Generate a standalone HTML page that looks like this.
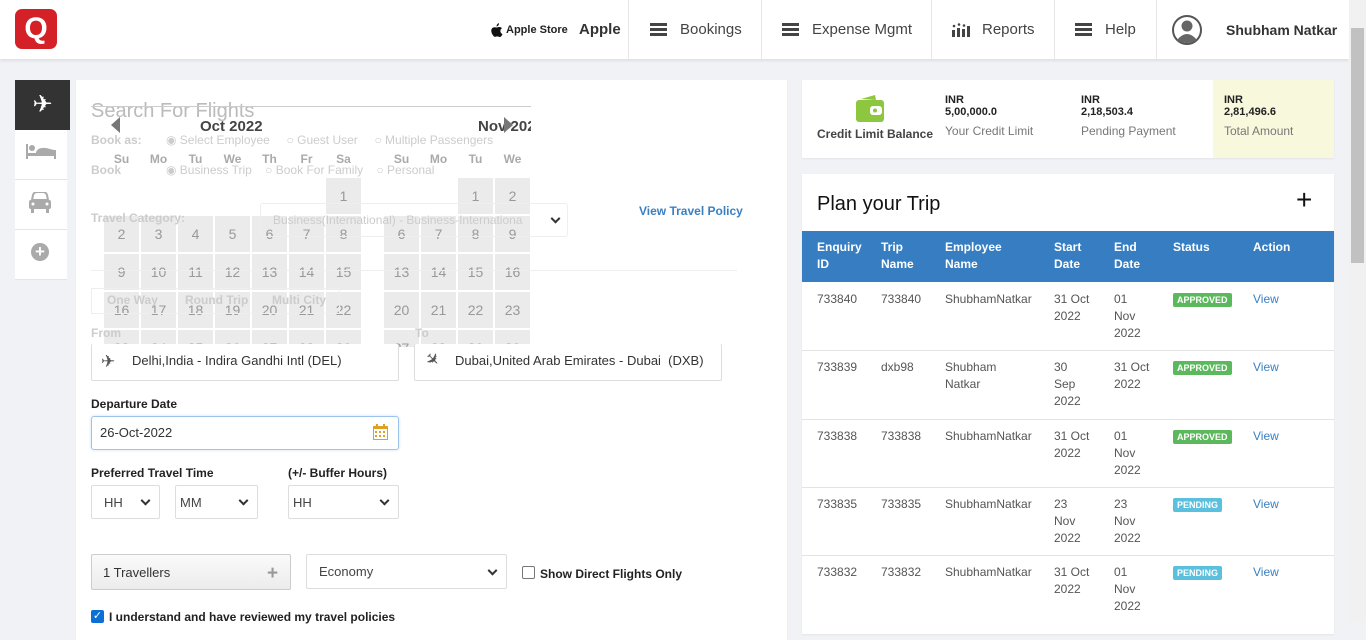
<!DOCTYPE html>
<html><head><meta charset="utf-8"><style>
*{box-sizing:border-box;margin:0;padding:0}
body{width:1366px;height:622px;overflow:hidden;background:#f1f2f6;font-family:"Liberation Sans",sans-serif;position:relative;color:#333;font-size:13px}
.a{position:absolute}
.hdr{left:0;top:0;width:1349px;height:59px;background:#fff;box-shadow:0 2px 3px rgba(0,0,0,.08)}
.nav{top:0;height:59px;display:flex;align-items:center;font-size:15px;color:#444;white-space:nowrap}
.sep{top:0;width:1px;height:59px;background:#e6e6e6}
.ham{display:inline-block;width:17px;height:13px;border-top:3px solid #444;border-bottom:3px solid #444;position:relative;margin-right:13px}
.ham:after{content:"";position:absolute;left:0;top:2px;width:17px;height:3px;background:#444}
.card{background:#fff;box-shadow:0 1px 2px rgba(0,0,0,.06)}
.cell{position:absolute;width:35px;height:36px;background:#ebebeb;color:#999;font-size:14px;text-align:center;line-height:36px}
.dh{position:absolute;font-size:12px;font-weight:bold;color:#aaa}
.lbl{font-size:12px;font-weight:bold;color:#222}
.box{border:1px solid #ddd;border-radius:2px;background:#fff}
.sel{font-size:13px;color:#444;display:flex;align-items:center;padding-left:12px}
.chev{position:absolute;right:10px;top:50%;width:7px;height:7px;border-right:2px solid #333;border-bottom:2px solid #333;transform:translateY(-70%) rotate(45deg)}
.th{color:#fff;font-weight:bold;font-size:12px;line-height:17px}
.td{font-size:12px;color:#555;line-height:17px}
.badge{color:#fff;font-size:9px;font-weight:bold;padding:2px 4px;border-radius:2px}
.faint{color:#ccc;font-size:12px;white-space:nowrap}
</style></head><body>
<div class="a hdr"></div>
<div class="a" style="left:15px;top:9px;width:42px;height:40px;background:#d42027;border-radius:7px;color:#fff;font-weight:bold;font-size:30px;text-align:center;line-height:40px">Q</div>
<svg class="a" style="left:491px;top:23px" width="12" height="14"><path d="M8 0 Q8 3 5.5 3.5 Q5.5 1 8 0Z M6 4.5 Q7.5 3.8 9 4 Q10.5 4.3 11 5.3 Q9 6.5 9.5 9 Q10 10.5 11.5 11 Q10.5 13.8 9 14 Q8 14 7 13.5 Q6 13.2 5 13.6 Q3.5 14.3 2.5 13 Q0 10 0.3 7 Q0.8 4.3 3.5 4.2 Q4.5 4.3 6 4.5Z" fill="#111"/></svg>
<div class="a nav" style="left:506px;font-size:11px;font-weight:bold;color:#222">Apple Store</div>
<div class="a nav" style="left:579px;font-size:15px;font-weight:bold;color:#333">Apple</div>
<div class="a sep" style="left:628px"></div>
<div class="a nav" style="left:650px"><span class="ham"></span>Bookings</div>
<div class="a sep" style="left:761px"></div>
<div class="a nav" style="left:782px"><span class="ham"></span>Expense Mgmt</div>
<div class="a sep" style="left:931px"></div>
<div class="a nav" style="left:952px"><svg width="18" height="14" style="margin-right:12px"><g fill="#444"><rect x="0" y="7" width="3" height="7"/><rect x="5" y="5" width="3" height="9"/><rect x="10" y="6" width="3" height="8"/><rect x="15" y="3" width="3" height="11"/><circle cx="2" cy="3" r="1.3"/><circle cx="7" cy="1.5" r="1.3"/><circle cx="12" cy="2.5" r="1.3"/></g></svg>Reports</div>
<div class="a sep" style="left:1054px"></div>
<div class="a nav" style="left:1075px"><span class="ham"></span>Help</div>
<div class="a sep" style="left:1156px"></div>
<div class="a nav" style="left:1171px"><svg width="32" height="32"><circle cx="16" cy="16" r="14" fill="#fff" stroke="#555" stroke-width="2"/><circle cx="16" cy="12" r="5.5" fill="#666"/><path d="M6 26 Q16 14 26 26 Q16 32 6 26Z" fill="#666"/></svg></div>
<div class="a nav" style="left:1226px;font-weight:bold;color:#333;font-size:14px">Shubham Natkar</div>
<div class="a" style="left:1349px;top:0;width:17px;height:622px;background:#f1f1f1"></div>
<div class="a" style="left:1351px;top:28px;width:13px;height:235px;background:#c1c1c1"></div>

<!-- sidebar -->
<div class="a" style="left:15px;top:80px;width:52px;height:200px;background:#fff"></div>
<div class="a" style="left:15px;top:80px;width:55px;height:50px;background:#333;color:#fff;font-size:24px;text-align:center;line-height:50px">&#9992;</div>
<div class="a" style="left:15px;top:179px;width:52px;height:1px;background:#e5e5e5"></div>
<div class="a" style="left:15px;top:229px;width:52px;height:1px;background:#e5e5e5"></div>
<div class="a" style="left:15px;top:279px;width:52px;height:1px;background:#e5e5e5"></div>
<svg class="a" style="left:26px;top:142px" width="30" height="18"><g fill="#aaa"><rect x="0" y="2" width="2" height="15"/><rect x="28" y="8" width="2" height="9"/><rect x="0" y="11" width="30" height="3"/><circle cx="6" cy="6" r="3"/><path d="M10 10 Q12 5 20 6 L28 8 L28 11 L10 11Z"/></g></svg>
<svg class="a" style="left:29px;top:192px" width="22" height="22"><g fill="#aaa"><path d="M4 3 Q5 0 8 0 L14 0 Q17 0 18 3 L19 8 L3 8Z" fill="none" stroke="#aaa" stroke-width="2"/><rect x="0" y="8" width="22" height="9" rx="2"/><rect x="2" y="16" width="3" height="5"/><rect x="17" y="16" width="3" height="5"/></g><circle cx="4" cy="12" r="1.5" fill="#fff"/><circle cx="18" cy="12" r="1.5" fill="#fff"/></svg>
<div class="a" style="left:31px;top:243px;width:18px;height:18px;border-radius:50%;background:#aaa;color:#fff;text-align:center;line-height:18px;font-size:17px;font-weight:bold">+</div>

<!-- left card -->
<div class="a card" style="left:76px;top:80px;width:711px;height:560px"></div>

<!-- calendar overlay (below form text) -->
<div class="a" style="left:91px;top:107px;width:440px;height:240px;overflow:hidden">
<div class="a" style="left:20px;top:10px;width:0;height:0;border-top:8px solid transparent;border-bottom:8px solid transparent;border-right:9px solid #777"></div>
<div class="a" style="left:109px;top:11px;font-size:15px;font-weight:bold;color:#444;white-space:nowrap">Oct 2022</div>
<div class="a" style="left:387px;top:11px;font-size:15px;font-weight:bold;color:#444;white-space:nowrap">Nov 2022</div>
<div class="a" style="left:413px;top:10px;width:0;height:0;border-top:8px solid transparent;border-bottom:8px solid transparent;border-left:9px solid #777"></div>
<div id="cal"></div>
</div>
<script>
(function(){var c=document.getElementById('cal'),h='';
var ox=[13,50,87,124,161,198,235],nx=[293,330,367,404],ry=[71,109,147,185,223];
var dn=['Su','Mo','Tu','We','Th','Fr','Sa'];
for(var i=0;i<7;i++)h+='<div class="dh" style="left:'+ox[i]+'px;top:45px;width:35px;text-align:center">'+dn[i]+'</div>';
for(i=0;i<4;i++)h+='<div class="dh" style="left:'+nx[i]+'px;top:45px;width:35px;text-align:center">'+dn[i]+'</div>';
h+='<div class="cell" style="left:235px;top:71px">1</div>';
for(var r=1;r<5;r++)for(i=0;i<7;i++)h+='<div class="cell" style="left:'+ox[i]+'px;top:'+ry[r]+'px">'+(2+(r-1)*7+i)+'</div>';
h+='<div class="cell" style="left:367px;top:71px">1</div><div class="cell" style="left:404px;top:71px">2</div>';
for(r=1;r<5;r++)for(i=0;i<4;i++)h+='<div class="cell" style="left:'+nx[i]+'px;top:'+ry[r]+'px">'+(6+(r-1)*7+i)+'</div>';
c.innerHTML=h;})();
</script>

<div class="a" style="left:91px;top:100px;font-size:20px;color:#bbb">Search For Flights</div>
<div class="a" style="left:91px;top:106px;width:440px;height:1px;background:#ccc"></div>
<div class="a faint" style="left:91px;top:133px;font-weight:bold">Book as:</div>
<div class="a faint" style="left:166px;top:133px">◉ Select Employee &nbsp;&nbsp;&nbsp; ○ Guest User &nbsp;&nbsp;&nbsp; ○ Multiple Passengers</div>
<div class="a faint" style="left:91px;top:163px;font-weight:bold">Book</div>
<div class="a faint" style="left:166px;top:163px">◉ Business Trip &nbsp;&nbsp; ○ Book For Family &nbsp;&nbsp; ○ Personal</div>
<div class="a faint" style="left:91px;top:211px;font-weight:bold">Travel Category:</div>
<div class="a" style="left:260px;top:203px;width:308px;height:34px;border:1px solid #eee;border-radius:3px"></div>
<div class="a faint" style="left:273px;top:213px">Business(International) - Business-Internationa</div>
<div class="a chev" style="left:552px;top:220px;right:auto"></div>
<div class="a" style="left:639px;top:204px;font-size:12px;font-weight:bold;color:#3a80c1">View Travel Policy</div>
<div class="a" style="left:91px;top:270px;width:646px;height:1px;background:#eee"></div>
<div class="a" style="left:91px;top:288px;width:249px;height:26px;border:1px solid #eee"></div>
<div class="a faint" style="left:107px;top:293px;font-weight:bold">One Way</div>
<div class="a faint" style="left:185px;top:293px;font-weight:bold">Round Trip</div>
<div class="a faint" style="left:272px;top:293px;font-weight:bold">Multi City</div>
<div class="a faint" style="left:91px;top:326px;font-weight:bold">From</div>
<div class="a faint" style="left:415px;top:326px;font-weight:bold">To</div>

<div class="a box" style="left:91px;top:344px;width:308px;height:37px;border-top:none;font-size:13px;color:#333;padding:9px 0 0 40px;white-space:nowrap">Delhi,India - Indira Gandhi Intl (DEL)</div>
<div class="a" style="left:101px;top:352px;font-size:17px;color:#555">&#9992;</div>
<div class="a box" style="left:414px;top:344px;width:308px;height:37px;border-top:none;font-size:13px;color:#333;padding:9px 0 0 40px;white-space:nowrap">Dubai,United Arab Emirates - Dubai &nbsp;(DXB)</div>
<div class="a" style="left:425px;top:350px;font-size:17px;color:#555;transform:rotate(45deg)">&#9992;</div>
<div class="a lbl" style="left:91px;top:397px">Departure Date</div>
<div class="a" style="left:91px;top:416px;width:308px;height:34px;border:1px solid #9cc3ea;border-radius:3px;box-shadow:0 0 3px #cfe3f7;font-size:13px;color:#333;padding:8px 0 0 8px">26-Oct-2022</div>
<svg class="a" style="left:373px;top:424px" width="15" height="16"><rect x="0.5" y="2.5" width="14" height="13" fill="#fff" stroke="#e0a020"/><rect x="0" y="2" width="15" height="3" fill="#e0a020"/><g fill="#e0a020"><rect x="2" y="7" width="2" height="2"/><rect x="6" y="7" width="2" height="2"/><rect x="10" y="7" width="2" height="2"/><rect x="2" y="11" width="2" height="2"/><rect x="6" y="11" width="2" height="2"/><rect x="10" y="11" width="2" height="2"/><rect x="3" y="0" width="2" height="3"/><rect x="10" y="0" width="2" height="3"/></g></svg>
<div class="a lbl" style="left:91px;top:466px">Preferred Travel Time</div>
<div class="a lbl" style="left:288px;top:466px">(+/- Buffer Hours)</div>
<div class="a box sel" style="left:91px;top:485px;width:69px;height:34px">HH<span class="chev"></span></div>
<div class="a box sel" style="left:175px;top:485px;width:83px;height:34px;padding-left:4px">MM<span class="chev"></span></div>
<div class="a box sel" style="left:288px;top:485px;width:111px;height:34px;padding-left:4px">HH<span class="chev"></span></div>
<div class="a" style="left:91px;top:554px;width:200px;height:36px;border:1px solid #ccc;border-radius:2px;background:linear-gradient(#fafafa,#ececec);font-size:13px;color:#333;padding:10px 0 0 11px">1 Travellers</div>
<div class="a" style="left:267px;top:563px;font-size:19px;font-weight:bold;color:#999">+</div>
<div class="a box sel" style="left:306px;top:554px;width:201px;height:35px">Economy<span class="chev"></span></div>
<div class="a" style="left:522px;top:566px;width:13px;height:13px;border:1px solid #777;border-radius:2px"></div>
<div class="a lbl" style="left:540px;top:567px">Show Direct Flights Only</div>
<div class="a" style="left:91px;top:610px;width:13px;height:13px;background:#0b6fd6;border-radius:2px;color:#fff;font-size:11px;line-height:13px;text-align:center">✓</div>
<div class="a lbl" style="left:109px;top:610px">I understand and have reviewed my travel policies</div>

<!-- right top card -->
<div class="a card" style="left:802px;top:80px;width:532px;height:78px"></div>
<div class="a" style="left:1213px;top:80px;width:121px;height:78px;background:#f8f8dc"></div>
<svg class="a" style="left:856px;top:95px" width="28" height="27"><path d="M5 4 L19 0 L20 5Z" fill="#8dc63f"/><rect x="0" y="5" width="28" height="22" rx="3" fill="#8dc63f"/><rect x="14" y="11" width="12" height="9" rx="3" fill="#fff"/><circle cx="19" cy="15.5" r="2" fill="#8dc63f"/></svg>
<div class="a" style="left:817px;top:127px;font-size:12px;font-weight:bold;color:#444">Credit Limit Balance</div>
<div class="a" style="left:945px;top:94px;font-size:11px;font-weight:bold;color:#222;line-height:12px">INR<br>5,00,000.0</div>
<div class="a" style="left:945px;top:124px;font-size:12px;color:#777">Your Credit Limit</div>
<div class="a" style="left:1081px;top:94px;font-size:11px;font-weight:bold;color:#222;line-height:12px">INR<br>2,18,503.4</div>
<div class="a" style="left:1081px;top:124px;font-size:12px;color:#777">Pending Payment</div>
<div class="a" style="left:1224px;top:94px;font-size:11px;font-weight:bold;color:#222;line-height:12px">INR<br>2,81,496.6</div>
<div class="a" style="left:1224px;top:124px;font-size:12px;color:#777">Total Amount</div>

<!-- plan card -->
<div class="a card" style="left:802px;top:174px;width:532px;height:460px"></div>
<div class="a" style="left:817px;top:193px;font-size:20px;color:#111">Plan your Trip</div>
<div class="a" style="left:1296px;top:186px;font-size:28px;color:#111;line-height:28px">+</div>
<div class="a" style="left:802px;top:231px;width:532px;height:51px;background:#367dc2"></div>
<div class="a th" style="left:817px;top:239px">Enquiry<br>ID</div>
<div class="a th" style="left:881px;top:239px">Trip<br>Name</div>
<div class="a th" style="left:945px;top:239px">Employee<br>Name</div>
<div class="a th" style="left:1054px;top:239px">Start<br>Date</div>
<div class="a th" style="left:1114px;top:239px">End<br>Date</div>
<div class="a th" style="left:1173px;top:239px">Status</div>
<div class="a th" style="left:1253px;top:239px">Action</div>
<div id="rows"></div>
<script>
(function(){var d=[['733840','733840','ShubhamNatkar','31 Oct<br>2022','01<br>Nov<br>2022',1],
['733839','dxb98','Shubham<br>Natkar','30<br>Sep<br>2022','31 Oct<br>2022',1],
['733838','733838','ShubhamNatkar','31 Oct<br>2022','01<br>Nov<br>2022',1],
['733835','733835','ShubhamNatkar','23<br>Nov<br>2022','23<br>Nov<br>2022',0],
['733832','733832','ShubhamNatkar','31 Oct<br>2022','01<br>Nov<br>2022',0]];
var h='',x=[817,881,945,1054,1114];
for(var i=0;i<d.length;i++){var y=282+i*68.3;
if(i>0)h+='<div class="a" style="left:802px;top:'+y+'px;width:532px;height:1px;background:#e3e3e3"></div>';
for(var j=0;j<5;j++)h+='<div class="a td" style="left:'+x[j]+'px;top:'+(y+9)+'px">'+d[i][j]+'</div>';
h+='<div class="a badge" style="left:1173px;top:'+(y+11)+'px;background:'+(d[i][5]?'#5cb85c':'#5bc0de')+'">'+(d[i][5]?'APPROVED':'PENDING')+'</div>';
h+='<div class="a td" style="left:1253px;top:'+(y+9)+'px;color:#3a80c1">View</div>';}
document.getElementById('rows').innerHTML=h;})();
</script>
</body></html>
